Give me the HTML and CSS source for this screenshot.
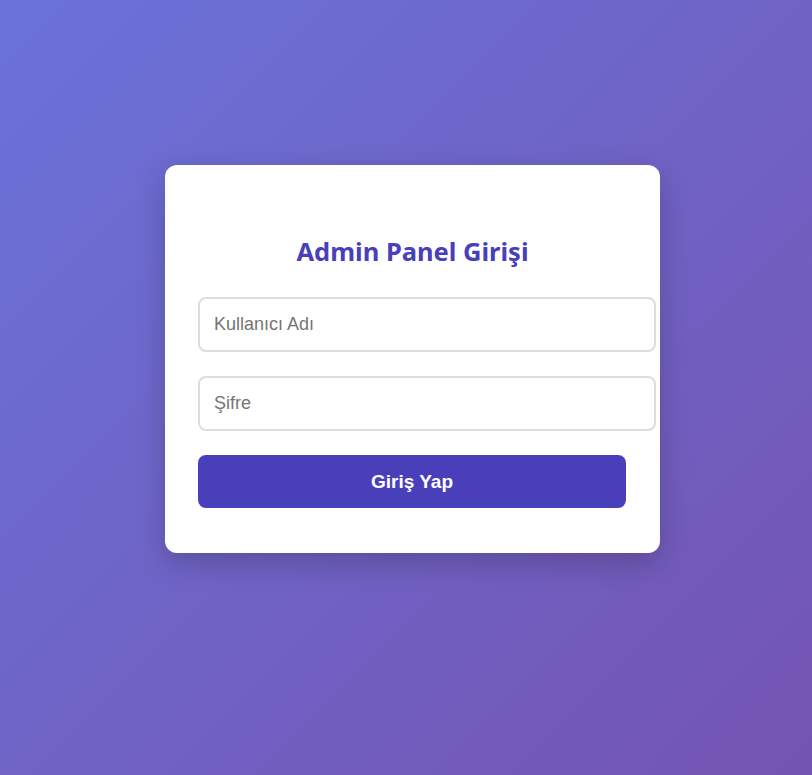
FILE: index.html
```html
<!DOCTYPE html>
<html lang="tr">
<head>
<meta charset="utf-8">
<title>Admin Panel Girişi</title>
<link rel="stylesheet" href="styles.css">
</head>
<body>
<main class="page">
  <div class="card">
    <h2 class="title">Admin Panel Girişi</h2>
    <form class="form">
      <input class="field" type="text" placeholder="Kullanıcı Adı">
      <input class="field" type="password" placeholder="Şifre">
      <button class="btn" type="button">Giriş Yap</button>
    </form>
  </div>
</main>
</body>
</html>
```
FILE: styles.css
```css
html, body {
  margin: 0;
  padding: 0;
  height: 100%;
}
body {
  background: linear-gradient(135deg, #6a72d9 0%, #7454b2 100%);
  font-family: "Liberation Sans", Arial, sans-serif;
}
.page {
  height: 775px;
  display: flex;
  justify-content: flex-start;
  align-items: flex-start;
  padding: 165px 0 0 165px;
  box-sizing: border-box;
}
.card {
  width: 495px;
  box-sizing: border-box;
  background: #fff;
  border-radius: 12px;
  padding: 68px 33px 45px;
  box-shadow: 0 10px 30px rgba(0, 0, 0, 0.2);
}
.title {
  margin: 0 0 28px;
  height: 36px;
  line-height: 36px;
  text-align: center;
  font-family: "Noto Sans", "Open Sans", sans-serif;
  font-weight: 700;
  font-size: 25.5px;
  color: #4a3fbb;
}
.form {
  display: flex;
  flex-direction: column;
  gap: 24px;
}
.field {
  width: 458px;
  height: 55px;
  box-sizing: border-box;
  padding: 0 14px;
  border: 2px solid #dddddd;
  border-radius: 8px;
  font-family: "Liberation Sans", Arial, sans-serif;
  font-size: 18px;
  color: #333;
  outline: none;
}
.field::placeholder {
  color: #757575;
}
.btn {
  width: 428px;
  height: 53px;
  border: none;
  border-radius: 8px;
  background: #4a3fbb;
  color: #fff;
  font-family: "Liberation Sans", Arial, sans-serif;
  font-weight: 700;
  font-size: 19px;
  cursor: pointer;
}
```
